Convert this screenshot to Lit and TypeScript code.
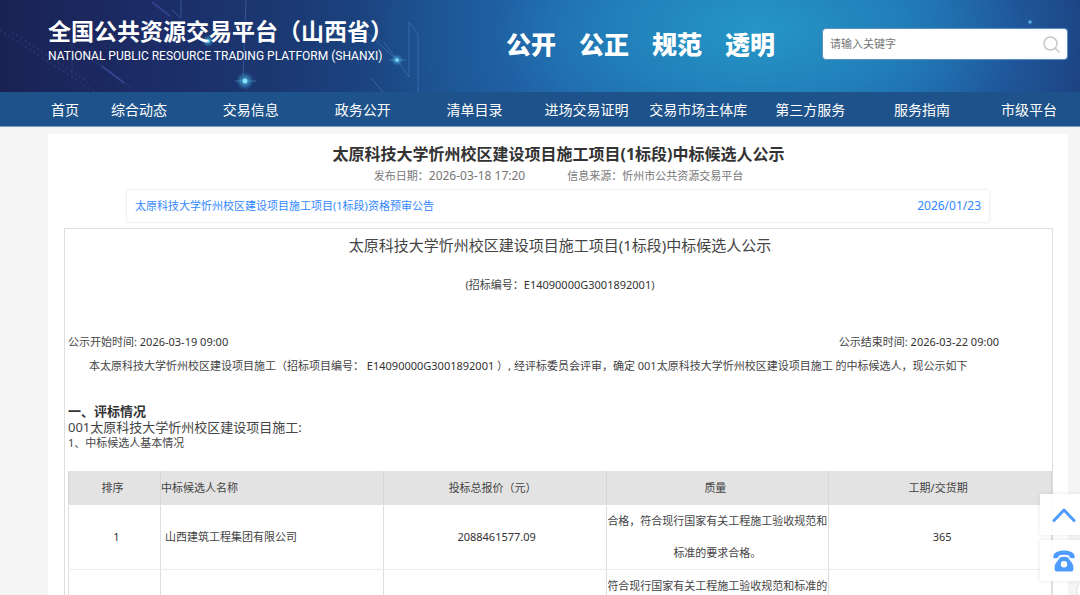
import { LitElement, html, css, svg } from "lit";
import { customElement, property } from "lit/decorators.js";

const fontStack = css`"Noto Sans", "Noto Sans CJK SC", sans-serif`;

@customElement("site-header")
class SiteHeader extends LitElement {
  static styles = css`
    :host {
      display: block;
      color: #fff;
      font-family: ${fontStack};
    }
    .banner {
      position: relative;
      overflow: hidden;
      height: 92px;
      box-sizing: border-box;
      display: flex;
      align-items: center;
      padding: 0 12px 4px 48px;
      background:
        radial-gradient(ellipse 36% 210% at 70% 32%, #2596c6 0%, rgba(34, 135, 190, 0.85) 34%, rgba(33, 106, 175, 0.4) 68%, rgba(30, 85, 155, 0) 100%),
        linear-gradient(90deg, #1a2254 0%, #1c2c66 14%, #1b3c77 29%, #1c4f8c 40%, #2060a5 52%, #205fa6 84%, #1c3c7a 100%);
    }
    .art {
      position: absolute;
      left: 0;
      top: 0;
      width: 1080px;
      height: 92px;
    }
    .brand {
      position: relative;
      flex: none;
      width: 458px;
      padding-bottom: 6px;
    }
    .name {
      margin: 0;
      font-size: 23px;
      line-height: 30px;
      font-weight: 700;
      white-space: nowrap;
    }
    .english {
      margin: 0;
      font-family: Roboto, "Noto Sans", sans-serif;
      font-size: 12px;
      line-height: 20px;
      white-space: nowrap;
    }
    .slogan {
      position: relative;
      flex: none;
      display: flex;
      gap: 23px;
      margin: 0;
      font-size: 25px;
      line-height: 30px;
      font-weight: 900;
    }
    .search {
      position: relative;
      display: flex;
      align-items: center;
      width: 246px;
      height: 32px;
      box-sizing: border-box;
      margin-left: auto;
      padding: 0 7px;
      border: 1px solid #5c8fc4;
      border-radius: 4px;
      background: #fff;
    }
    .field {
      flex: 1;
      min-width: 0;
      padding: 0;
      border: 0;
      outline: 0;
      background: none;
      color: #333;
      font: 11px/20px ${fontStack};
    }
    .field::placeholder {
      color: #757575;
    }
    .go {
      display: flex;
      padding: 0;
      border: 0;
      background: none;
    }
    .menu {
      display: grid;
      grid-template-columns: 36px repeat(8, minmax(0, 1fr)) 102px;
      padding: 1px 0 0 47px;
      background: #1e528a;
      border-bottom: 1px solid #7d9cc0;
    }
    .item {
      color: #fff;
      font-size: 14px;
      line-height: 33px;
      text-align: center;
      text-decoration: none;
      white-space: nowrap;
    }
  `;

  private star(x: number, y: number, r: number) {
    return svg`
      <circle cx=${x} cy=${y} r=${r * 3} fill="url(#glow)" />
      <circle cx=${x} cy=${y} r=${r * 0.8} fill="#86e2fb" />`;
  }

  render() {
    const menu = ["首页", "综合动态", "交易信息", "政务公开", "清单目录", "进场交易证明", "交易市场主体库", "第三方服务", "服务指南", "市级平台"];
    return html`
      <header class="banner">
        <svg class="art" viewBox="0 0 1080 92" aria-hidden="true">
          <defs>
            <radialGradient id="glow">
              <stop offset="0" stop-color="#5cc9f0" stop-opacity=".9" />
              <stop offset="1" stop-color="#3aa0da" stop-opacity="0" />
            </radialGradient>
          </defs>
          <g fill="none" stroke="#5d8fd0" stroke-opacity=".4">
            <path d="M246 0L243 76M181 0V18L172 10M409 22V77L384 42M418 34V92M409 22L418 34M371 78L383 92M366 32L397 60" />
            <path d="M0 30L95 92M12 32L88 82" stroke="#4650a4" stroke-width="2" stroke-dasharray="2 3" stroke-opacity=".3" />
            <path d="M102 66L124 83M152 2L170 16" stroke="#5560c4" stroke-width="2" />
            <path d="M70 44L135 90M72 40V76" stroke-opacity=".15" />
          </g>
          <path d="M235 81H256M389 60H406" stroke="#54c0ea" stroke-opacity=".4" />
          ${this.star(245, 81, 3)} ${this.star(397, 60, 2)} ${this.star(208, 41, 2)} ${this.star(1030, 22, 1)}
        </svg>
        <div class="brand">
          <h1 class="name">全国公共资源交易平台（山西省）</h1>
          <p class="english">NATIONAL PUBLIC RESOURCE TRADING PLATFORM (SHANXI)</p>
        </div>
        <p class="slogan"><span>公开</span><span>公正</span><span>规范</span><span>透明</span></p>
        <form class="search" @submit=${(e: Event) => e.preventDefault()}>
          <input class="field" type="text" aria-label="请输入关键字" placeholder="请输入关键字" />
          <button class="go" aria-label="搜索">
            <svg width="17" height="17" viewBox="0 0 17 17" fill="none" stroke="#c8c8c8" stroke-width="1.5" stroke-linecap="round">
              <circle cx="7.5" cy="7.5" r="6.5" />
              <path d="M12.2 12.2L16 16" />
            </svg>
          </button>
        </form>
      </header>
      <nav class="menu">${menu.map((m) => html`<a class="item" href="#">${m}</a>`)}</nav>
    `;
  }
}

interface Candidate {
  rank: string;
  name: string;
  price: string;
  quality: string;
  term: string;
}

@customElement("candidate-table")
class CandidateTable extends LitElement {
  @property({ attribute: false }) rows: Candidate[] = [];

  static styles = css`
    :host {
      display: block;
    }
    .table {
      width: 100%;
      table-layout: fixed;
      border-collapse: collapse;
      font-size: 11px;
      line-height: 32px;
      color: #444;
    }
    .head {
      height: 32px;
      padding: 0 4px 0 0;
      font-weight: 400;
      background: #e3e3e3;
      border: 1px solid #d6d6d6;
      border-color: #e3e3e3 #d6d6d6;
    }
    .head.rank {
      width: 87px;
    }
    .head.left {
      padding: 0;
      text-align: left;
    }
    .cell {
      height: 63px;
      padding: 0;
      text-align: center;
      vertical-align: top;
      border: 1px solid #e4e4e4;
      border-color: #ececec #dedede;
    }
    .number {
      padding-left: 4px;
      vertical-align: middle;
      color: #333;
    }
    .cell.left {
      padding-left: 4px;
      text-align: left;
      vertical-align: middle;
    }
  `;

  render() {
    return html`
      <table class="table">
        <thead>
          <tr>
            <th class="head rank">排序</th>
            <th class="head left">中标候选人名称</th>
            <th class="head">投标总报价（元）</th>
            <th class="head">质量</th>
            <th class="head">工期/交货期</th>
          </tr>
        </thead>
        <tbody>
          ${this.rows.map(
            (r) => html`<tr>
              <td class="cell number">${r.rank}</td>
              <td class="cell left">${r.name}</td>
              <td class="cell number">${r.price}</td>
              <td class="cell">${r.quality}</td>
              <td class="cell number">${r.term}</td>
            </tr>`
          )}
        </tbody>
      </table>
    `;
  }
}

@customElement("side-tools")
class SideTools extends LitElement {
  static styles = css`
    :host {
      position: fixed;
      right: 0;
      bottom: 14px;
      display: grid;
      gap: 5px;
    }
    .tool {
      display: flex;
      align-items: center;
      justify-content: center;
      width: 40px;
      height: 41px;
      padding: 0 0 0 8px;
      border: 0;
      background: rgba(255, 255, 255, 0.94);
      box-shadow: 0 0 4px rgba(0, 0, 0, 0.1);
    }
    .bubble {
      position: absolute;
      left: 36px;
      top: 86px;
      width: 20px;
      height: 20px;
      border: 1px solid #ddd;
      border-radius: 50%;
      background: #fff;
    }
  `;

  render() {
    return html`
      <button class="tool" aria-label="返回顶部">
        <svg width="24" height="16" viewBox="0 0 24 16" fill="none" stroke="#4f9cff" stroke-width="3" stroke-linecap="round" stroke-linejoin="round">
          <path d="M2 13.5L12 3L22 13.5" />
        </svg>
      </button>
      <button class="tool" aria-label="联系电话">
        <svg width="22" height="22" viewBox="0 0 22 22" fill="#4f9cff">
          <path d="M.4 8.2C-.4 3 4.5.6 11 .6S22.4 3 21.6 8.2C18.8 8.6 16.2 8 15.9 5.5C13 4.5 9 4.5 6.1 5.5C5.8 8 3.2 8.6.4 8.2Z" />
          <path fill-rule="evenodd" d="M6.8 7.4C9 6.5 13 6.5 15.2 7.4C16.2 10.3 20.4 12.5 20.4 17.2V19Q20.4 21.6 17.8 21.6H4.2Q1.6 21.6 1.6 19V17.2C1.6 12.5 5.8 10.3 6.8 7.4ZM11 11A3.2 3.2 0 1 0 11 17.4A3.2 3.2 0 1 0 11 11Z" />
        </svg>
      </button>
      <span class="bubble"></span>
    `;
  }
}

@customElement("app-root")
class AppRoot extends LitElement {
  static styles = css`
    :host {
      display: block;
      height: 100vh;
      overflow: hidden auto;
      scrollbar-width: none;
      background: #f5f5f5;
      color: #444;
      font-family: ${fontStack};
      font-size: 11px;
      line-height: 16px;
    }
    .card {
      margin: 7px 12px 0 48px;
      padding: 8px 15px 16px 16px;
      background: #fff;
    }
    .title {
      margin: 0;
      font-size: 16px;
      line-height: 24px;
      text-align: center;
      color: #333;
    }
    .meta {
      display: flex;
      justify-content: center;
      gap: 42px;
      color: #777;
      line-height: 20px;
    }
    .date {
      font-size: 12px;
    }
    .related {
      display: flex;
      justify-content: space-between;
      margin: 4px 64px 6px 63px;
      padding: 7px 8px;
      border-radius: 2px;
      line-height: 18px;
      box-shadow: 0 0 3px rgba(0, 0, 0, 0.16);
      color: #3388ff;
      text-decoration: none;
    }
    .notice {
      border: 1px solid #dedede;
      padding-left: 3px;
    }
    .heading {
      margin: 0;
      font-size: 15px;
      line-height: 32px;
      font-weight: 400;
      text-align: center;
    }
    .code {
      margin: 16px 0 41px;
      text-align: center;
    }
    .number {
      color: #333;
    }
    .times {
      display: flex;
      justify-content: space-between;
      padding-right: 53px;
    }
    .summary {
      margin: 8px 0 29px;
      padding-left: 21px;
      white-space: nowrap;
    }
    .section {
      margin: 0;
      font-size: 13px;
      line-height: 16px;
      color: #333;
    }
    .lot {
      margin: 0;
      font-size: 13px;
    }
    .part {
      margin: 0 0 20px;
    }
  `;

  private rows: Candidate[] = [
    { rank: "1", name: "山西建筑工程集团有限公司", price: "2088461577.09", quality: "合格，符合现行国家有关工程施工验收规范和标准的要求合格。", term: "365" },
    { rank: "", name: "", price: "", quality: "符合现行国家有关工程施工验收规范和标准的", term: "" },
  ];

  render() {
    return html`
      <site-header></site-header>
      <main class="card">
        <h2 class="title">太原科技大学忻州校区建设项目施工项目(1标段)中标候选人公示</h2>
        <div class="meta">
          <span>发布日期：<span class="date">2026-03-18 17:20</span></span>
          <span>信息来源：忻州市公共资源交易平台</span>
        </div>
        <a class="related" href="#">
          <span>太原科技大学忻州校区建设项目施工项目(1标段)资格预审公告</span>
          <span class="date">2026/01/23</span>
        </a>
        <article class="notice">
          <h3 class="heading">太原科技大学忻州校区建设项目施工项目(1标段)中标候选人公示</h3>
          <p class="code">(招标编号：<span class="number">E14090000G3001892001</span>)</p>
          <div class="times">
            <span>公示开始时间: <span class="number">2026-03-19 09:00</span></span>
            <span>公示结束时间: <span class="number">2026-03-22 09:00</span></span>
          </div>
          <p class="summary">
            本太原科技大学忻州校区建设项目施工（招标项目编号： <span class="number">E14090000G3001892001</span>
            ）, 经评标委员会评审，确定 001太原科技大学忻州校区建设项目施工 的中标候选人，现公示如下
          </p>
          <h4 class="section">一、评标情况</h4>
          <p class="lot">001太原科技大学忻州校区建设项目施工:</p>
          <p class="part">1、中标候选人基本情况</p>
          <candidate-table .rows=${this.rows}></candidate-table>
        </article>
      </main>
      <side-tools></side-tools>
    `;
  }
}
